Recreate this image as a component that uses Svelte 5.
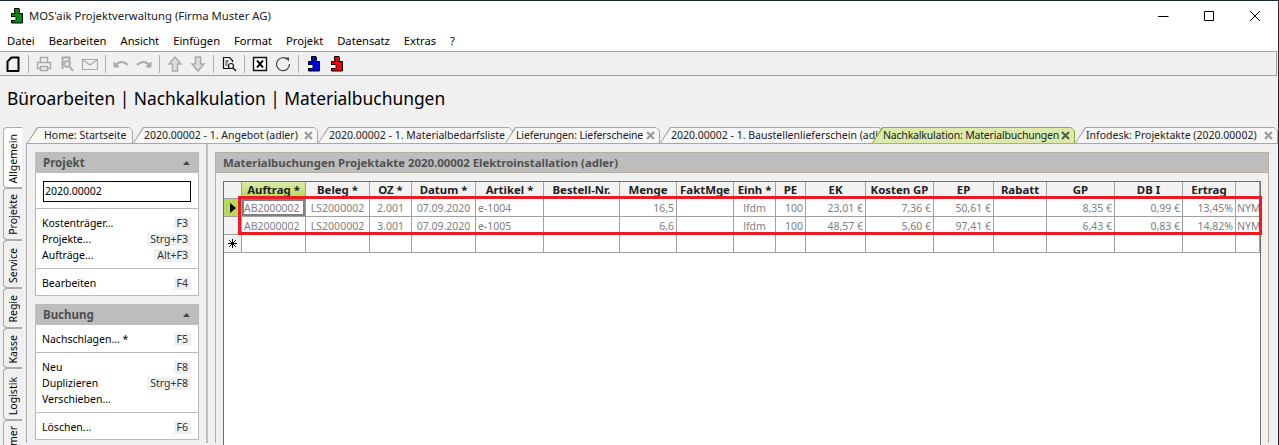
<script>
    const menu = ["Datei", "Bearbeiten", "Ansicht", "Einfügen", "Format", "Projekt", "Datensatz", "Extras", "?"];
    const sideTabs = ["Allgemein", "Projekte", "Service", "Regie", "Kasse", "Logistik", "Nummer"];

    // width is where the next tab starts, over is how far the next one covers this one
    const tabs = [
        { label: "Home: Startseite", width: 106, over: 0, pad: 17 },
        { label: "2020.00002 - 1. Angebot (adler)", width: 185, over: 0, close: true },
        { label: "2020.00002 - 1. Materialbedarfsliste", width: 187, over: 8 },
        { label: "Lieferungen: Lieferscheine", width: 155, over: 0, close: true, track: -0.15 },
        { label: "2020.00002 - 1. Baustellenlieferschein (adler)", width: 212, over: 11 },
        { label: "Nachkalkulation: Materialbuchungen", width: 203, over: 0, close: true, active: true, track: -0.18 },
        { label: "Infodesk: Projektakte (2020.00002)", width: 203, over: 0, close: true }
    ];

    const columns = [
        { label: "", width: 18 },
        { label: "Auftrag *", width: 64, selected: true },
        { label: "Beleg *", width: 64, align: "center" },
        { label: "OZ *", width: 42, align: "center" },
        { label: "Datum *", width: 64, align: "center" },
        { label: "Artikel *", width: 68 },
        { label: "Bestell-Nr.", width: 76 },
        { label: "Menge", width: 57, align: "right" },
        { label: "FaktMge", width: 57 },
        { label: "Einh *", width: 42, align: "center" },
        { label: "PE", width: 30, align: "right" },
        { label: "EK", width: 60, align: "right" },
        { label: "Kosten GP", width: 68, align: "right" },
        { label: "EP", width: 60, align: "right" },
        { label: "Rabatt", width: 53, align: "right" },
        { label: "GP", width: 68, align: "right" },
        { label: "DB I", width: 68, align: "right" },
        { label: "Ertrag", width: 53, align: "right" },
        { label: "", width: 24 }
    ];

    const rows = [
        ["AB2000002", "LS2000002", "2.001", "07.09.2020", "e-1004", "", "16,5", "", "lfdm", "100", "23,01 €", "7,36 €", "50,61 €", "", "8,35 €", "0,99 €", "13,45%", "NYM"],
        ["AB2000002", "LS2000002", "3.001", "07.09.2020", "e-1005", "", "6,6", "", "lfdm", "100", "48,57 €", "5,60 €", "97,41 €", "", "6,43 €", "0,83 €", "14,82%", "NYM"]
    ];

    const blanks = columns.slice(1).map(() => "");

    const sections = [
        {
            title: "Projekt",
            input: "2020.00002",
            groups: [
                [["Kostenträger...", "F3"], ["Projekte...", "Strg+F3"], ["Aufträge...", "Alt+F3"]],
                [["Bearbeiten", "F4"]]
            ]
        },
        {
            title: "Buchung",
            groups: [
                [["Nachschlagen... *", "F5"]],
                [["Neu", "F8"], ["Duplizieren", "Strg+F8"], ["Verschieben...", ""]],
                [["Löschen...", "F6"]]
            ]
        }
    ];

    const puzzle = "M5.500 .5h4.500v1h.5v3h-1v1h4v9.500H2.500V5.500H6.500v-1h-1z";
    const slot = "M2 8.500h4l1 1v2l-1 1H2";
</script>

<div class="window">
    <header class="titlebar">
        <svg class="appicon" viewBox="0 0 16 16" width="16" height="16"><path d={puzzle} fill="#0a8a0a" stroke="#000" /><path d={slot} fill="#fff" stroke="#000" /></svg>
        <span class="apptitle">MOS'aik Projektverwaltung (Firma Muster AG)</span>
        <div class="winbuttons">
            <svg viewBox="0 0 46 20" width="46" height="20"><path d="M18 10.500h10.500" stroke="#000" fill="none" /></svg>
            <svg viewBox="0 0 46 20" width="46" height="20"><path d="M18.500 5.500h9v9h-9z" stroke="#000" fill="none" /></svg>
            <svg viewBox="0 0 46 20" width="46" height="20"><path d="M18 5l10 10M28 5L18 15" stroke="#000" fill="none" /></svg>
        </div>
    </header>

    <nav class="menubar">
        {#each menu as item}
            <span>{item}</span>
        {/each}
    </nav>

    <div class="toolbar">
        <button aria-label="Neu"><svg viewBox="0 0 16 16"><path d="M2.500 15V5.500L6.500 1.500h7V15z" fill="none" stroke="#000" stroke-width="2" stroke-linejoin="round" /></svg></button>
        <i class="sep"></i>
        <button aria-label="Drucken"><svg viewBox="0 0 16 16"><path d="M4.500 6V1.500h7V6M1.500 6.500h13v6h-3M4.500 12.500h-3v-6M4.500 10.500h7v4h-7z" fill="none" stroke="#aaa" stroke-width="1.500" /></svg></button>
        <button aria-label="Vorschau"><svg viewBox="0 0 16 16"><path d="M3.500 13V1.500h7V7" fill="none" stroke="#aaa" stroke-width="2" /><circle cx="8" cy="8" r="3" fill="#ddd" stroke="#aaa" stroke-width="1.500" /><path d="M10 10l4 5" stroke="#aaa" stroke-width="2" /></svg></button>
        <button aria-label="Mail"><svg viewBox="0 0 16 16"><path d="M.5 3.500h15v10H.5zM.5 3.500L8 9l7.500-5.500" fill="none" stroke="#aaa" stroke-width="1.200" /></svg></button>
        <i class="sep"></i>
        <button aria-label="Rückgängig"><svg viewBox="0 0 16 16"><path d="M1 6v5h5z" fill="#aaa" stroke="#aaa" /><path d="M3 9c3-4 8-4 12 0" fill="none" stroke="#aaa" stroke-width="2" /></svg></button>
        <button aria-label="Wiederholen"><svg viewBox="0 0 16 16"><path d="M15 6v5h-5z" fill="#aaa" stroke="#aaa" /><path d="M13 9C10 5 5 5 1 9" fill="none" stroke="#aaa" stroke-width="2" /></svg></button>
        <i class="sep"></i>
        <button aria-label="Hoch"><svg viewBox="0 0 16 16"><path d="M8 1l6 7h-3.500v7h-5V8H2z" fill="#ddd" stroke="#aaa" stroke-width="1.500" /></svg></button>
        <button aria-label="Runter"><svg viewBox="0 0 16 16"><path d="M8 15l6-7h-3.500V1h-5v7H2z" fill="#ddd" stroke="#aaa" stroke-width="1.500" /></svg></button>
        <i class="sep"></i>
        <button aria-label="Suchen"><svg viewBox="0 0 16 16"><path d="M9 12.500H2.500v-11h6l3 3V6" fill="none" stroke="#111" stroke-width="1.200" /><path d="M4.500 5h3M4.500 7h2M4.500 9h2" stroke="#111" /><circle cx="10" cy="10" r="2.500" fill="#fff" stroke="#111" stroke-width="1.200" /><path d="M12 12l3 3" stroke="#111" stroke-width="1.500" /></svg></button>
        <i class="sep"></i>
        <button aria-label="Excel"><svg viewBox="0 0 16 16"><path d="M1.500 1.500h13v13h-13z" fill="#fff" stroke="#111" stroke-width="1.400" /><path d="M5 4.500l6 7M11 4.500l-6 7" stroke="#111" stroke-width="2" /></svg></button>
        <button aria-label="Aktualisieren"><svg viewBox="0 0 16 16"><path d="M12.500 3.500A6.500 6.500 0 1 0 14.500 8" fill="none" stroke="#444" stroke-width="1.200" /><path d="M10.500 1.500h3.500v4z" fill="#444" /></svg></button>
        <i class="sep"></i>
        <button aria-label="Blau"><svg viewBox="0 0 16 16"><path d={puzzle} fill="#0000e8" stroke="#000" /><path d={slot} fill="#fff" stroke="#000" /></svg></button>
        <button aria-label="Rot"><svg viewBox="0 0 16 16"><path d={puzzle} fill="#f00000" stroke="#000" /><path d={slot} fill="#fff" stroke="#000" /></svg></button>
    </div>

    <h1>Büroarbeiten | Nachkalkulation | Materialbuchungen</h1>

    <div class="tabstrip">
        {#each tabs as tab}
            <div
                class="tab"
                class:active={tab.active}
                style="width: {tab.width + tab.over}px; margin-right: {-tab.over}px; padding-left: {tab.pad ?? 11}px; letter-spacing: {tab.track ?? 0}px"
            >
                <span class="tablabel">{tab.label}</span>
                {#if tab.close}
                    <svg class="tabclose" viewBox="0 0 9 9" width="9" height="9"><path d="M1 1l7 7M8 1L1 8" stroke={tab.active ? "#555" : "#999"} stroke-width="2" /></svg>
                {/if}
            </div>
        {/each}
    </div>

    <div class="workspace">
        <div class="sidetabs">
            {#each sideTabs as tab, i}
                <div class="sidetab" class:current={i === 0}><span>{tab}</span></div>
            {/each}
        </div>

        <div class="frame">
            <aside class="sidebar">
                {#each sections as section}
                    <section class="panel">
                        <div class="panelhead">
                            <span>{section.title}</span>
                            <svg viewBox="0 0 7 4" width="7" height="4"><path d="M3.500 0L7 4H0z" fill="#444" /></svg>
                        </div>
                        {#if section.input}
                            <div class="inputgroup"><div class="projectinput">{section.input}</div></div>
                        {/if}
                        {#each section.groups as group}
                            <div class="group">
                                {#each group as [label, key]}
                                    <div class="action">
                                        <span>{label}</span>
                                        {#if key}<kbd>{key}</kbd>{/if}
                                    </div>
                                {/each}
                            </div>
                        {/each}
                    </section>
                {/each}
            </aside>

            <div class="splitter"></div>

            <main class="content">
                <div class="contenthead">Materialbuchungen Projektakte 2020.00002 Elektroinstallation (adler)</div>
                <div class="contentbody">
                    <div class="gridwrap">
                        <table>
                            <colgroup>
                                {#each columns as col}
                                    <col style="width: {col.width}px" />
                                {/each}
                            </colgroup>
                            <thead>
                                <tr>
                                    {#each columns as col}
                                        <th class:selected={col.selected}>{col.label}</th>
                                    {/each}
                                </tr>
                            </thead>
                            <tbody>
                                {#each rows as row, r}
                                    <tr>
                                        <td class="rowhead" class:currentrow={r === 0}>
                                            {#if r === 0}<svg viewBox="0 0 6 10" width="6" height="10"><path d="M0 0l6 5-6 5z" fill="#000" /></svg>{/if}
                                        </td>
                                        {#each row as cell, c}
                                            <td class="align-{columns[c + 1].align ?? 'left'}" class:focus={r === 0 && c === 0}>{cell}</td>
                                        {/each}
                                    </tr>
                                {/each}
                                <tr>
                                    <td class="rowhead newrow">
                                        <svg viewBox="0 0 9 9" width="9" height="9"><path d="M4.500 0v9M0 4.500h9M1.200 1.200l6.600 6.600M7.800 1.200L1.200 7.800" stroke="#000" stroke-width="1" /></svg>
                                    </td>
                                    {#each blanks as cell}
                                        <td>{cell}</td>
                                    {/each}
                                </tr>
                            </tbody>
                        </table>
                        <div class="highlight"></div>
                    </div>
                </div>
            </main>
        </div>
    </div>
</div>

<style>
    :global(body) {
        margin: 0;
        background: #f0f0f0;
    }

    .window {
        width: 1279px;
        height: 445px;
        overflow: hidden;
        box-sizing: border-box;
        border-top: 1px solid #1e2a35;
        border-right: 1px solid #1e2a35;
        background: #f0f0f0;
        color: #000;
        font-family: "Noto Sans", sans-serif;
        font-size: 10.500px;
    }

    .titlebar {
        display: flex;
        align-items: center;
        height: 29px;
        padding-left: 9px;
        background: #fff;
        font-size: 11.300px;
    }

    .appicon {
        margin-right: 4px;
    }

    .apptitle {
        color: #222;
    }

    .winbuttons {
        display: flex;
        margin-left: auto;
    }

    .menubar {
        display: flex;
        align-items: center;
        gap: 14px;
        height: 21px;
        padding-left: 7px;
        background: #fff;
        font-size: 11.200px;
    }

    .toolbar {
        display: flex;
        align-items: center;
        height: 23px;
        margin-right: 1px;
        padding-left: 1.500px;
        border: 1px solid #a0a0a0;
        border-width: 1px 1px 1px 0;
        background: #f0f0f0;
    }

    .toolbar button {
        display: flex;
        justify-content: center;
        width: 23px;
        padding: 0;
        border: 0;
        background: none;
    }

    .toolbar svg {
        width: 16px;
        height: 16px;
    }

    .sep {
        width: 1px;
        height: 18px;
        margin: 0 3.500px;
        background: #b0b0b0;
    }

    h1 {
        height: 51px;
        margin: 0;
        padding-left: 7px;
        box-sizing: border-box;
        font-size: 17.400px;
        font-weight: 400;
        line-height: 45px;
    }

    .tabstrip {
        display: flex;
        height: 16px;
        padding-left: 27px;
    }

    .tab {
        position: relative;
        flex: none;
        display: flex;
        align-items: center;
        box-sizing: border-box;
        padding-right: 6px;
        background: #a8a8a8;
        clip-path: polygon(0 100%, 10px 0, calc(100% - 4px) 0, 100% 4px, 100% 100%);
        color: #222;
    }

    .tab::before {
        content: "";
        position: absolute;
        inset: 1px 1px 0 1px;
        background: #f7f7f7;
        clip-path: polygon(0 100%, 10px 0, calc(100% - 3px) 0, 100% 3px, 100% 100%);
    }

    .tab.active {
        background: #8fb020;
    }

    .tab.active::before {
        background: #dcebab;
    }

    .tablabel {
        position: relative;
        flex: none;
        white-space: nowrap;
    }

    .tabclose {
        position: absolute;
        top: 4px;
        right: 5px;
    }

    .workspace {
        display: flex;
        height: 300px;
    }

    .sidetabs {
        flex: none;
        width: 26px;
        box-sizing: border-box;
        padding-left: 3px;
        margin-top: -16px;
    }

    .sidetab {
        display: flex;
        align-items: center;
        justify-content: flex-end;
        width: 19px;
        padding-bottom: 4px;
        box-sizing: border-box;
        border: 1px solid #aaa;
        border-right: 0;
        border-radius: 4px 0 0 4px;
        background: #f0f0f0;
        writing-mode: vertical-rl;
    }

    .sidetab span {
        transform: rotate(180deg);
        white-space: nowrap;
    }

    .sidetab.current {
        height: 61px;
        background: #fff;
    }

    .sidetab:nth-child(2) {
        height: 52px;
    }

    .sidetab:nth-child(3) {
        height: 48px;
    }

    .sidetab:nth-child(4) {
        height: 40px;
    }

    .sidetab:nth-child(5) {
        height: 40px;
    }

    .sidetab:nth-child(6) {
        height: 52px;
    }

    .sidetab:nth-child(7) {
        height: 60px;
        padding: 5px 0 0;
        justify-content: flex-start;
    }

    .frame {
        flex: 1;
        display: flex;
        min-width: 0;
        box-sizing: border-box;
        padding: 8px 9px 0 8px;
        border-top: 1px solid #a8a8a8;
        border-left: 1px solid #a8a8a8;
        background: #f0f0f0;
    }

    .sidebar {
        flex: none;
        width: 164px;
    }

    .panel {
        margin-bottom: 8px;
        border: 1px solid #bbb;
        border-top: 0;
        background: #fff;
    }

    .panelhead {
        display: flex;
        align-items: center;
        justify-content: space-between;
        height: 21px;
        margin: 0 -1px;
        padding: 0 9px 0 8px;
        background: #bdbdbd;
        color: #505050;
        font-size: 11.500px;
        font-weight: 700;
    }

    .inputgroup {
        height: 35px;
        box-sizing: border-box;
        padding: 8px 7px 0;
    }

    .projectinput {
        height: 21px;
        box-sizing: border-box;
        padding-left: 1px;
        border: 1px solid #000;
        line-height: 19px;
    }

    .group {
        padding: 6px 7px 5px 6px;
        border-top: 1px solid #bbb;
    }

    .panelhead + .group {
        border-top: 0;
    }

    .group:last-child {
        padding-bottom: 4px;
    }

    .action {
        display: flex;
        align-items: center;
        justify-content: space-between;
        height: 16px;
    }

    kbd {
        padding: 0 3px;
        background: #f0f0f0;
        color: #333;
        font-family: inherit;
        font-size: 10.500px;
        line-height: 13px;
    }

    .splitter {
        flex: none;
        width: 2px;
        margin: -8px 7px 0 7px;
        background: #c4c0b6;
    }

    .content {
        flex: 1;
        min-width: 0;
        border: 1px solid #b5aea4;
        border-bottom: 0;
    }

    .contenthead {
        height: 19px;
        padding-left: 7px;
        border-bottom: 1px solid #b5aea4;
        background: #bdbdbd;
        color: #505050;
        font-size: 11.400px;
        font-weight: 700;
        line-height: 19px;
    }

    .contentbody {
        height: 300px;
        padding: 8px 7px 0 7px;
        background: #f0f0f0;
    }

    .gridwrap {
        position: relative;
        height: 300px;
        box-sizing: border-box;
        border: 1px solid #6e6e6e;
        border-width: 1px 1px 0;
        background: #fff;
    }

    table {
        width: 1036px;
        border-collapse: separate;
        border-spacing: 0;
        table-layout: fixed;
    }

    th,
    td {
        box-sizing: border-box;
        padding: 0 2px;
        border-right: 1px solid #a0a0a0;
        border-bottom: 1px solid #a0a0a0;
        overflow: hidden;
        white-space: nowrap;
    }

    th {
        height: 17px;
        padding: 0 0 1px;
        background: #f2f2f2;
        color: #222;
        font-size: 11.400px;
        font-weight: 700;
        line-height: 15px;
    }

    th.selected {
        background: linear-gradient(#dcebab, #b7d85a);
    }

    td {
        height: 18px;
        padding-top: 1px;
        background: #fff;
        color: #808080;
    }

    td:last-child {
        padding: 1px 0 0 1px;
    }

    .align-right {
        text-align: right;
    }

    .align-center {
        text-align: center;
    }

    td.focus {
        box-shadow: inset 0 0 0 2px #808080;
    }

    .rowhead {
        padding: 0;
        background: #f2f2f2;
        text-align: center;
    }

    .rowhead svg {
        display: block;
        margin: 0 auto;
    }

    .currentrow {
        background: #b7d85a;
    }

    .highlight {
        position: absolute;
        top: 14px;
        left: 14px;
        width: 1024px;
        height: 39px;
        box-sizing: border-box;
        border: 3px solid #ed1c24;
    }
</style>
